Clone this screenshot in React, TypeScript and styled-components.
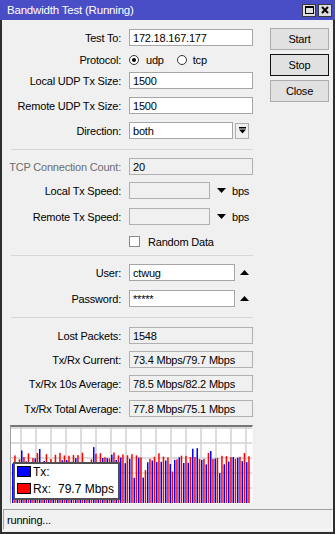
import styled, { createGlobalStyle } from "styled-components";

const GlobalStyle = createGlobalStyle`
  html, body {
    margin: 0;
    padding: 0;
    background: #f0f0f0;
  }
  body {
    font-family: "Liberation Sans", Arial, sans-serif;
    font-size: 11px;
    letter-spacing: -0.2px;
    color: #000;
  }
`;

const Window = styled.div`
  width: 335px;
  height: 534px;
  display: flex;
  flex-direction: column;
  overflow: hidden;
`;

const TitleBar = styled.div`
  height: 20px;
  flex: none;
  background: #4a4ec6;
  color: #fff;
  display: flex;
  align-items: center;
  padding: 0 3px 0 7px;
  font-size: 11.5px;
`;

const Title = styled.div`
  flex: 1;
`;

const TitleButtons = styled.div`
  display: flex;
  gap: 2px;
`;

const TitleButton = styled.div`
  width: 14px;
  height: 13px;
  box-sizing: border-box;
  border: 1px solid #3a3a3a;
  background: #dedede;
  display: flex;
  align-items: center;
  justify-content: center;
`;

const Body = styled.div`
  flex: 1;
  background: #f0f0f0;
  border: 2px solid #2e2e2e;
  border-top: none;
  display: flex;
  flex-direction: column;
`;

const TopArea = styled.div`
  display: flex;
  align-items: flex-start;
  padding-top: 9px;
`;

const Form = styled.div`
  width: 251px;
  display: flex;
  flex-direction: column;
`;

const Row = styled.div<{ $mt?: number }>`
  display: flex;
  align-items: center;
  height: 17px;
  margin-top: ${(p) => p.$mt ?? 8}px;
  white-space: nowrap;
`;

const Label = styled.div<{ $disabled?: boolean }>`
  width: 119px;
  flex: none;
  margin-right: 8px;
  text-align: right;
  color: ${(p) => (p.$disabled ? "#6d6d6d" : "#000")};
`;

const Field = styled.div<{ $w?: number; $ro?: boolean }>`
  width: ${(p) => p.$w ?? 124}px;
  height: 17px;
  flex: none;
  box-sizing: border-box;
  border: 1px solid ${(p) => (p.$ro ? "#b0b0b0" : "#a6a6a6")};
  background: ${(p) => (p.$ro ? "#f0f0f0" : "#fff")};
  padding: 0 3px;
  display: flex;
  align-items: center;
  overflow: hidden;
`;

const DropButton = styled.div`
  width: 14px;
  height: 16px;
  margin-left: 2px;
  box-sizing: border-box;
  border: 1px solid #adadad;
  background: #f0f0f0;
  display: flex;
  align-items: center;
  justify-content: center;
`;

const ArrowBox = styled.div<{ $ml: number }>`
  margin-left: ${(p) => p.$ml}px;
  display: flex;
  align-items: center;
`;

const Unit = styled.span`
  margin-left: 6px;
`;

const Radio = styled.span<{ $on?: boolean }>`
  width: 10px;
  height: 10px;
  box-sizing: border-box;
  border-radius: 50%;
  border: 1px solid #333;
  background: #fff;
  display: flex;
  align-items: center;
  justify-content: center;
  &::after {
    content: "";
    width: 4px;
    height: 4px;
    border-radius: 50%;
    background: ${(p) => (p.$on ? "#000" : "transparent")};
  }
`;

const OptionText = styled.span<{ $ml: number; $mr?: number }>`
  margin-left: ${(p) => p.$ml}px;
  margin-right: ${(p) => p.$mr ?? 0}px;
`;

const CheckBox = styled.span`
  width: 11px;
  height: 11px;
  box-sizing: border-box;
  border: 1px solid #8a8a8a;
  background: #fff;
`;

const Divider = styled.div<{ $mt: number; $mb: number }>`
  height: 1px;
  background: #d6d6d6;
  margin: ${(p) => p.$mt}px 0 ${(p) => p.$mb}px 9px;
`;

const ButtonCol = styled.div`
  display: flex;
  flex-direction: column;
  gap: 4px;
  margin: -1px 0 0 17px;
`;

const Button = styled.button<{ $focus?: boolean }>`
  width: 59px;
  height: 22px;
  box-sizing: border-box;
  padding: 0;
  background: #e1e1e1;
  border: 1px solid ${(p) => (p.$focus ? "#111" : "#adadad")};
  font: inherit;
  letter-spacing: inherit;
  color: #000;
`;

const Chart = styled.div`
  position: relative;
  width: 243px;
  height: 79px;
  margin: 8px 0 0 8px;
  box-sizing: border-box;
  background: #fff;
  border-top: 2px solid #777;
  border-left: 1px solid #a0a0a0;
  border-right: 1px solid #f8f8f8;
  border-bottom: 1px solid #f8f8f8;
  svg {
    display: block;
  }
`;

const Legend = styled.div`
  position: absolute;
  left: 2px;
  top: 35px;
  width: 107px;
  height: 38px;
  box-sizing: border-box;
  border: 2px solid #505050;
  background: #fff;
  padding: 2px 0 0 2px;
  display: flex;
  flex-direction: column;
  gap: 6px;
  font-size: 12px;
  letter-spacing: 0;
`;

const LegendRow = styled.div`
  display: flex;
  align-items: center;
  height: 11px;
`;

const Swatch = styled.span<{ $color: string }>`
  width: 14px;
  height: 11px;
  box-sizing: border-box;
  border: 1px solid #000;
  background: ${(p) => p.$color};
  margin-right: 2px;
`;

const LegendValue = styled.span`
  margin-left: 7px;
`;

const StatusBar = styled.div`
  margin: auto 0 2px 1px;
  width: 330px;
  height: 21px;
  box-sizing: border-box;
  border: 1px solid;
  border-color: #a0a0a0 #fafafa #fafafa #a0a0a0;
  display: flex;
  align-items: center;
  padding-left: 3px;
`;

const Arrow = ({ up }: { up?: boolean }) => (
  <svg width="9" height="5" viewBox="0 0 9 5">
    <polygon points={up ? "0,5 9,5 4.5,0" : "0,0 9,0 4.5,5"} fill="#000" />
  </svg>
);

const rnd = (i: number) => {
  const x = Math.sin(i * 12.9898 + 78.233) * 43758.5453;
  return x - Math.floor(x);
};

const W = 241;
const H = 76;
const bars = Array.from({ length: 53 }, (_, i) => {
  let tx = 42 + (rnd(i) - 0.5) * 8;
  let rx = 47 + (rnd(i + 100) - 0.5) * 7;
  if (rnd(i + 200) > 0.88) tx += 10;
  if (rnd(i + 300) > 0.93) tx -= 14;
  if (rnd(i + 400) > 0.93) rx -= 12;
  return { x: 1 + i * 4.5, tx, rx };
});

const BandwidthChart = () => (
  <svg width={W} height={H}>
    {Array.from({ length: 16 }, (_, k) => (
      <line key={"v" + k} x1={10 + k * 15} y1={0} x2={10 + k * 15} y2={H} stroke="#d2d2d2" strokeWidth={1.5} />
    ))}
    {[1, 16, 31, 46, 61].map((y) => (
      <line key={"h" + y} x1={0} y1={y} x2={W} y2={y} stroke="#d2d2d2" strokeWidth={1.5} />
    ))}
    {bars.map((b, i) => (
      <g key={i}>
        <rect x={b.x} y={H - b.tx} width={1.5} height={b.tx} fill="#0000ff" />
        <rect x={b.x + 2.2} y={H - b.rx} width={1.5} height={b.rx} fill="#ff0000" />
      </g>
    ))}
  </svg>
);

export default function App() {
  return (
    <>
      <GlobalStyle />
      <Window>
        <TitleBar>
          <Title>Bandwidth Test (Running)</Title>
          <TitleButtons>
            <TitleButton>
              <svg width="9" height="8" viewBox="0 0 9 8">
                <rect x="0.5" y="1" width="8" height="6.5" fill="none" stroke="#000" />
                <rect x="0" y="0" width="9" height="2" fill="#000" />
              </svg>
            </TitleButton>
            <TitleButton>
              <svg width="8" height="8" viewBox="0 0 8 8">
                <path d="M1 1 L7 7 M7 1 L1 7" stroke="#000" strokeWidth="2" />
              </svg>
            </TitleButton>
          </TitleButtons>
        </TitleBar>
        <Body>
          <TopArea>
            <Form>
              <Row $mt={0}>
                <Label>Test To:</Label>
                <Field>172.18.167.177</Field>
              </Row>
              <Row $mt={5}>
                <Label>Protocol:</Label>
                <Radio $on />
                <OptionText $ml={7} $mr={13}>udp</OptionText>
                <Radio />
                <OptionText $ml={6}>tcp</OptionText>
              </Row>
              <Row $mt={4}>
                <Label>Local UDP Tx Size:</Label>
                <Field>1500</Field>
              </Row>
              <Row>
                <Label>Remote UDP Tx Size:</Label>
                <Field>1500</Field>
              </Row>
              <Row>
                <Label>Direction:</Label>
                <Field $w={104}>both</Field>
                <DropButton>
                  <svg width="7" height="7" viewBox="0 0 7 7">
                    <rect x="0" y="0" width="7" height="1.5" fill="#000" />
                    <polygon points="0,2.5 7,2.5 3.5,6.5" fill="#000" />
                  </svg>
                </DropButton>
              </Row>
              <Divider $mt={10} $mb={8} />
              <Row $mt={0}>
                <Label $disabled>TCP Connection Count:</Label>
                <Field $ro>20</Field>
              </Row>
              <Row $mt={7}>
                <Label>Local Tx Speed:</Label>
                <Field $ro $w={81} />
                <ArrowBox $ml={7}>
                  <Arrow />
                </ArrowBox>
                <Unit>bps</Unit>
              </Row>
              <Row $mt={9}>
                <Label>Remote Tx Speed:</Label>
                <Field $ro $w={81} />
                <ArrowBox $ml={7}>
                  <Arrow />
                </ArrowBox>
                <Unit>bps</Unit>
              </Row>
              <Row>
                <Label />
                <CheckBox />
                <OptionText $ml={8}>Random Data</OptionText>
              </Row>
              <Divider $mt={5} $mb={8} />
              <Row $mt={0}>
                <Label>User:</Label>
                <Field $w={106}>ctwug</Field>
                <ArrowBox $ml={5}>
                  <Arrow up />
                </ArrowBox>
              </Row>
              <Row $mt={9}>
                <Label>Password:</Label>
                <Field $w={106}>*****</Field>
                <ArrowBox $ml={5}>
                  <Arrow up />
                </ArrowBox>
              </Row>
              <Divider $mt={10} $mb={9} />
              <Row $mt={0}>
                <Label>Lost Packets:</Label>
                <Field $ro>1548</Field>
              </Row>
              <Row $mt={7}>
                <Label>Tx/Rx Current:</Label>
                <Field $ro>73.4 Mbps/79.7 Mbps</Field>
              </Row>
              <Row $mt={7}>
                <Label>Tx/Rx 10s Average:</Label>
                <Field $ro>78.5 Mbps/82.2 Mbps</Field>
              </Row>
              <Row>
                <Label>Tx/Rx Total Average:</Label>
                <Field $ro>77.8 Mbps/75.1 Mbps</Field>
              </Row>
            </Form>
            <ButtonCol>
              <Button>Start</Button>
              <Button $focus>Stop</Button>
              <Button>Close</Button>
            </ButtonCol>
          </TopArea>
          <Chart>
            <BandwidthChart />
            <Legend>
              <LegendRow>
                <Swatch $color="#0000ff" />
                Tx:
              </LegendRow>
              <LegendRow>
                <Swatch $color="#ff0000" />
                Rx:<LegendValue>79.7 Mbps</LegendValue>
              </LegendRow>
            </Legend>
          </Chart>
          <StatusBar>running...</StatusBar>
        </Body>
      </Window>
    </>
  );
}
